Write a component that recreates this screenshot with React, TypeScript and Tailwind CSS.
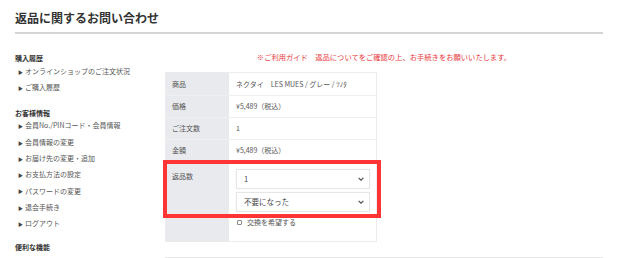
import React from "react";

const font = { fontFamily: '"Noto Sans CJK JP", "Noto Sans", sans-serif' };

function SideHeader({ children, className = "" }: { children: React.ReactNode; className?: string }) {
  return (
    <div className={"h-[10px] leading-[10px] text-[7px] font-bold text-[#333] " + className}>{children}</div>
  );
}

function SideItem({ children }: { children: React.ReactNode }) {
  return (
    <div className="h-[16.3px] flex items-center text-[7px] text-[#555]">
      <span className="ml-[3px] mr-[2px] text-[5px] text-[#444] leading-none">▶</span>
      <span>{children}</span>
    </div>
  );
}

function Chevron() {
  return (
    <svg width="6" height="4" viewBox="0 0 6 4" className="block">
      <path d="M0.6 0.8 L3 3.2 L5.4 0.8" fill="none" stroke="#555" strokeWidth="1.2" />
    </svg>
  );
}

function FakeSelect({ value }: { value: string }) {
  return (
    <div className="h-[20px] w-full border border-[#e6e6e6] bg-white shadow-[0_0_1px_rgba(0,0,0,0.08)] flex items-center justify-between pl-[7px] pr-[5px] text-[7.5px] text-[#444]">
      <span>{value}</span>
      <Chevron />
    </div>
  );
}

function Row({ label, value, h }: { label: string; value: string; h: string }) {
  return (
    <div className={"flex border-b border-[#efefef] " + h}>
      <div className="w-[63px] shrink-0 bg-[#e9eaee] flex items-center pl-[6px] text-[7px] text-[#555]">{label}</div>
      <div className="flex-1 flex items-center pl-[7px] text-[7px] text-[#555]">{value}</div>
    </div>
  );
}

export default function App() {
  return (
    <div style={font} className="w-[620px] h-[258px] overflow-hidden bg-white relative">
      <div className="px-[15px] pr-[17px] pt-[10px]">
        <h1 className="text-[12px] leading-[16px] font-bold text-[#333] tracking-[0px]">返品に関するお問い合わせ</h1>
        <div className="mt-[6px] h-[2px] bg-[#d4d4d4]" />
      </div>
      <div className="flex px-[15px] pr-[17px]">
        <div className="w-[150px] shrink-0 pt-[19px]">
          <SideHeader>購入履歴</SideHeader>
          <SideItem>オンラインショップのご注文状況</SideItem>
          <SideItem>ご購入履歴</SideItem>
          <SideHeader className="mt-[12px]">お客様情報</SideHeader>
          <SideItem>会員No./PINコード・会員情報</SideItem>
          <SideItem>会員情報の変更</SideItem>
          <SideItem>お届け先の変更・追加</SideItem>
          <SideItem>お支払方法の設定</SideItem>
          <SideItem>パスワードの変更</SideItem>
          <SideItem>退会手続き</SideItem>
          <SideItem>ログアウト</SideItem>
          <SideHeader className="mt-[10px]">便利な機能</SideHeader>
        </div>
        <div className="flex-1 pt-[18px]">
          <div className="text-center text-[7.3px] leading-[10px] text-[#e8383d]">
            ※ご利用ガイド　返品についてをご確認の上、お手続きをお願いいたします。
          </div>
          <div className="mt-[10px] w-[212px] border border-[#ececec]">
            <Row label="商品" value="ネクタイ　LES MUES / グレー / ﾂﾉﾀ" h="h-[23px]" />
            <Row label="価格" value="¥5,489（税込）" h="h-[22px]" />
            <Row label="ご注文数" value="1" h="h-[22px]" />
            <Row label="金額" value="¥5,489（税込）" h="h-[22px]" />
            <div className="flex h-[79px]">
              <div className="w-[63px] shrink-0 bg-[#e9eaee] pl-[6px] pt-[9px] text-[7px] leading-[10px] text-[#555]">返品数</div>
              <div className="flex-1 pl-[7px] pr-[6px] pt-[7px]">
                <FakeSelect value="1" />
                <div className="h-[3px]" />
                <FakeSelect value="不要になった" />
                <div className="mt-[5px] h-[10px] flex items-center text-[7px] text-[#555]">
                  <span className="inline-block w-[5px] h-[5px] border border-[#888] rounded-[1px] mr-[5px] ml-[1px]" />
                  <span>交換を希望する</span>
                </div>
              </div>
            </div>
          </div>
          <div className="mt-[15px] h-[1px] bg-[#e8e8e8]" />
        </div>
      </div>
      <div className="absolute left-[163px] top-[160px] w-[218px] h-[58px] border-[4px] border-[#ff3535]" />
    </div>
  );
}
